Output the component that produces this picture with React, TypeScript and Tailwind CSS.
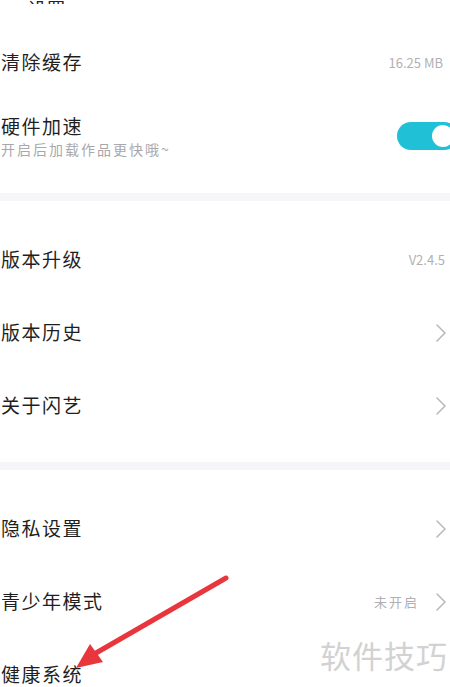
import React from 'react';

const font = { fontFamily: '"Noto Sans CJK SC", "Noto Sans", sans-serif' };

function Chevron() {
  return (
    <svg width="12" height="20" viewBox="0 0 12 20" className="shrink-0">
      <path d="M2 2 L10 10 L2 18" fill="none" stroke="#b9b9bd" strokeWidth="1.6" strokeLinecap="round" strokeLinejoin="round" />
    </svg>
  );
}

function Row({ title, right, chevron }: { title: string; right?: string; chevron?: boolean }) {
  return (
    <div className="flex h-[73px] items-center justify-between pl-[1px] pr-[3px]">
      <span className="text-[19px] tracking-[1.5px] text-[#1f1f1f]">{title}</span>
      <div className="flex items-center gap-[16px]">
        {right && (
          <span className={chevron ? 'text-[13px] tracking-[2px] text-[#b0b0b4]' : 'pr-[2px] text-[13px] text-[#b0b0b4]'}>
            {right}
          </span>
        )}
        {chevron && <Chevron />}
      </div>
    </div>
  );
}

function Divider() {
  return <div className="h-[8px] bg-[#f6f6f9]" />;
}

export default function App() {
  return (
    <div className="relative h-[687px] w-[450px] overflow-hidden bg-white" style={font}>
      {/* header, scrolled mostly out of view */}
      <div className="flex h-[4px] items-end overflow-hidden">
        <span className="text-[19px] leading-none text-[#222] mb-[-14px]">&lt; &nbsp;&nbsp;&nbsp;设置</span>
      </div>

      <div className="pt-[22px] pb-[21px]">
        <div className="flex h-[73px] items-center justify-between pl-[1px]">
          <span className="text-[19px] tracking-[1.5px] text-[#1f1f1f]">清除缓存</span>
          <span className="pr-[7px] text-[13px] text-[#b0b0b4]">16.25 MB</span>
        </div>
        <div className="flex h-[73px] items-center justify-between pl-[1px]">
          <div className="flex flex-col">
            <span className="text-[19px] leading-[26px] tracking-[1.5px] text-[#1f1f1f]">硬件加速</span>
            <span className="text-[14px] leading-[20px] tracking-[2px] text-[#a8a8ac]">开启后加载作品更快哦~</span>
          </div>
          <div className="mr-[-8px] flex h-[28px] w-[61px] items-center justify-end rounded-full bg-[#20c0d6] pr-[4px]">
            <div className="h-[22px] w-[22px] rounded-full bg-white" />
          </div>
        </div>
      </div>

      <Divider />

      <div className="pt-[22px] pb-[20px]">
        <Row title="版本升级" right="V2.4.5" />
        <Row title="版本历史" chevron />
        <Row title="关于闪艺" chevron />
      </div>

      <Divider />

      <div className="pt-[22px]">
        <Row title="隐私设置" chevron />
        <Row title="青少年模式" right="未开启" chevron />
        <Row title="健康系统" />
      </div>

      {/* watermark */}
      <div className="absolute left-[320px] top-[632px] text-[31px] tracking-[1px] text-[#d2d2d2]">软件技巧</div>

      {/* annotation arrow */}
      <svg className="absolute left-0 top-0" width="450" height="687" viewBox="0 0 450 687">
        <line x1="226" y1="578" x2="96" y2="653" stroke="#e8363c" strokeWidth="5" strokeLinecap="round" />
        <polygon points="76,668 90,644 103,662" fill="#e8363c" />
      </svg>
    </div>
  );
}
